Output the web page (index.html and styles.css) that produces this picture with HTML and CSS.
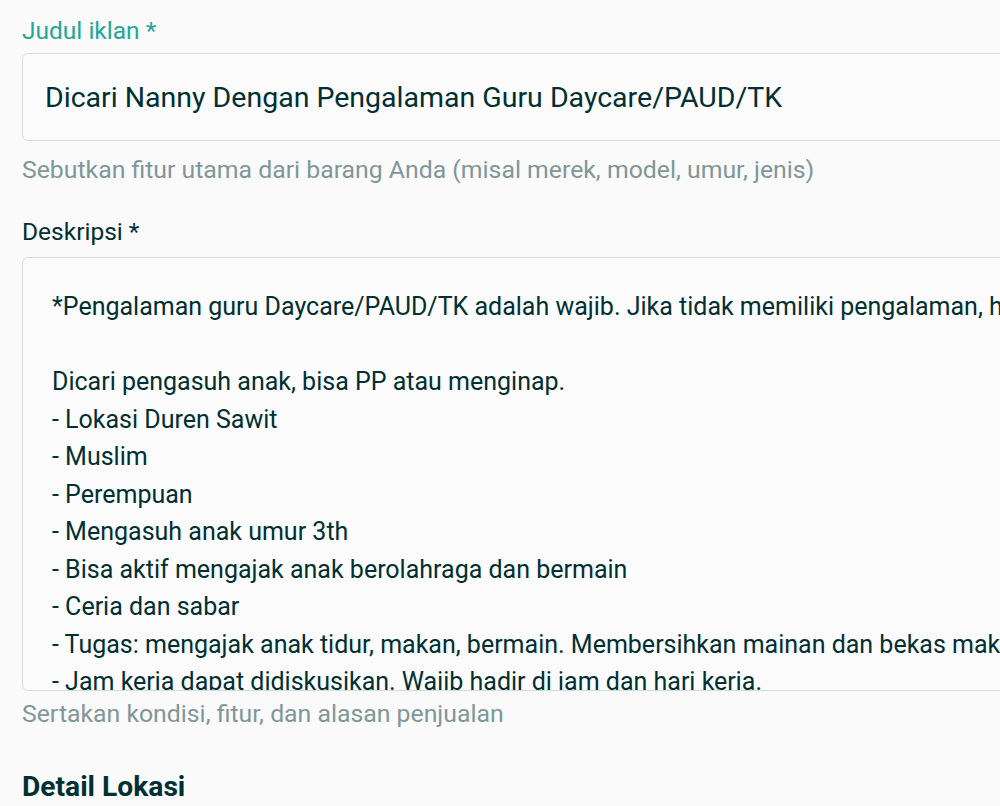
FILE: index.html
```html
<!DOCTYPE html>
<html lang="id">
<head>
    <meta charset="UTF-8">
    <meta name="viewport" content="width=device-width, initial-scale=1.0">
    <title>Pasang Iklan</title>
    <link rel="stylesheet" href="styles.css">
</head>
<body>
    <div class="form-page">
        <div class="field">
            <label class="field-label active" for="judul">Judul iklan *</label>
            <div class="input-box" id="judul">Dicari Nanny Dengan Pengalaman Guru Daycare/PAUD/TK</div>
            <p class="helper">Sebutkan fitur utama dari barang Anda (misal merek, model, umur, jenis)</p>
        </div>

        <div class="field">
            <label class="field-label" for="deskripsi">Deskripsi *</label>
            <div class="textarea-box" id="deskripsi">
                <p>*Pengalaman guru Daycare/PAUD/TK adalah wajib. Jika tidak memiliki pengalaman, harap tidak melamar.</p>
                <p>&nbsp;</p>
                <p>Dicari pengasuh anak, bisa PP atau menginap.</p>
                <p>- Lokasi Duren Sawit</p>
                <p>- Muslim</p>
                <p>- Perempuan</p>
                <p>- Mengasuh anak umur 3th</p>
                <p>- Bisa aktif mengajak anak berolahraga dan bermain</p>
                <p>- Ceria dan sabar</p>
                <p>- Tugas: mengajak anak tidur, makan, bermain. Membersihkan mainan dan bekas makan anak.</p>
                <p>- Jam kerja dapat didiskusikan. Wajib hadir di jam dan hari kerja.</p>
            </div>
            <p class="helper helper-tight">Sertakan kondisi, fitur, dan alasan penjualan</p>
        </div>

        <h2 class="section-title">Detail Lokasi</h2>
    </div>
</body>
</html>
```

FILE: styles.css
```css
body {
    margin: 0;
    background-color: #fafafa;
    font-family: Roboto, "Noto Sans", Arial, sans-serif;
    color: #002f34;
    overflow: hidden;
}

.form-page {
    padding: 16px 0 0 22px;
    width: 1100px; /* boxes run past the right edge */
}

.field-label {
    display: block;
    font-size: 24.5px;
    line-height: 30px;
    margin-bottom: 7px;
    color: #002f34;
}

.field-label.active {
    color: #23a69b;
}

.input-box {
    height: 88px;
    border: 1px solid #d5dcdd;
    border-radius: 6px;
    background-color: #fbfbfb;
    box-sizing: border-box;
    padding: 0 22px;
    display: flex;
    align-items: center;
    font-size: 28.5px;
    white-space: nowrap;
}

.helper {
    margin: 14px 0 0 0;
    font-size: 24.8px;
    line-height: 30px;
    color: #7f9799;
}

.field + .field {
    margin-top: 32px;
}

.field + .field .field-label {
    margin-bottom: 10px;
}

.textarea-box {
    height: 434px;
    border: 1px solid #d5dcdd;
    border-radius: 6px;
    background-color: #fbfbfb;
    box-sizing: border-box;
    padding: 30px 29px 0 29px;
    overflow: hidden;
    font-size: 25px;
    line-height: 37.5px;
    white-space: nowrap;
}

.textarea-box p {
    margin: 0;
}

.helper-tight {
    margin-top: 8px;
}

.section-title {
    margin: 41px 0 0 0;
    font-size: 28.2px;
    line-height: 34px;
    font-weight: bold;
    color: #002f34;
}
```
